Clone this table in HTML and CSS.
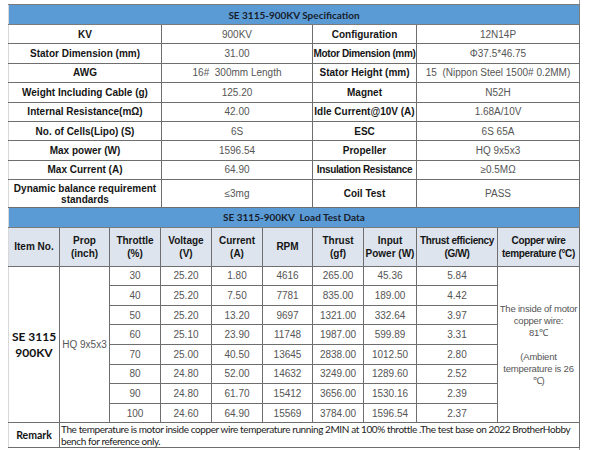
FILE: index.html
```html
<!DOCTYPE html>
<html lang="en">
<head>
    <meta charset="UTF-8">
    <link rel="stylesheet" href="styles.css">
</head>
<body>
    <div class="sheet">
        <!-- Specification -->
        <table class="spec">
            <colgroup>
                <col style="width:153px">
                <col style="width:151px">
                <col style="width:104px">
                <col style="width:163px">
            </colgroup>
            <tr class="band"><td colspan="4">SE 3115-900KV Specification</td></tr>
            <tr><th>KV</th><td>900KV</td><th>Configuration</th><td>12N14P</td></tr>
            <tr><th>Stator Dimension (mm)</th><td>31.00</td><th class="tight">Motor Dimension (mm)</th><td>Φ37.5*46.75</td></tr>
            <tr><th>AWG</th><td>16#&nbsp; 300mm Length</td><th>Stator Height (mm)</th><td>15&nbsp; (Nippon Steel 1500# 0.2MM)</td></tr>
            <tr><th>Weight Including Cable (g)</th><td>125.20</td><th>Magnet</th><td>N52H</td></tr>
            <tr><th>Internal Resistance(mΩ)</th><td>42.00</td><th>Idle Current@10V (A)</th><td>1.68A/10V</td></tr>
            <tr><th>No. of Cells(Lipo) (S)</th><td>6S</td><th>ESC</th><td>6S 65A</td></tr>
            <tr><th>Max power (W)</th><td>1596.54</td><th>Propeller</th><td>HQ 9x5x3</td></tr>
            <tr><th>Max Current (A)</th><td>64.90</td><th class="tight">Insulation Resistance</th><td>≥0.5MΩ</td></tr>
            <tr class="tall"><th class="wrap">Dynamic balance requirement standards</th><td>≤3mg</td><th>Coil Test</th><td>PASS</td></tr>
        </table>

        <!-- Load test -->
        <table class="load">
            <colgroup>
                <col style="width:51px">
                <col style="width:50px">
                <col style="width:51px">
                <col style="width:51px">
                <col style="width:51px">
                <col style="width:50px">
                <col style="width:51px">
                <col style="width:53px">
                <col style="width:81px">
                <col style="width:82px">
            </colgroup>
            <tr class="band"><td colspan="10">SE 3115-900KV&nbsp; Load Test Data</td></tr>
            <tr class="head">
                <th>Item No.</th>
                <th>Prop<br>(inch)</th>
                <th>Throttle<br>(%)</th>
                <th>Voltage<br>(V)</th>
                <th>Current<br>(A)</th>
                <th>RPM</th>
                <th>Thrust<br>(gf)</th>
                <th>Input<br>Power (W)</th>
                <th class="tight">Thrust efficiency<br>(G/W)</th>
                <th class="tight">Copper wire<br>temperature (°C)</th>
            </tr>
            <tr>
                <th rowspan="8" class="item">SE 3115<br>900KV</th>
                <td rowspan="8" class="prop">HQ 9x5x3</td>
                <td>30</td><td>25.20</td><td>1.80</td><td>4616</td><td>265.00</td><td>45.36</td><td>5.84</td>
                <td rowspan="8" class="note">The inside of motor<br>copper wire:<br>81℃<br><br>(Ambient<br>temperature is 26<br>℃)</td>
            </tr>
            <tr><td>40</td><td>25.20</td><td>7.50</td><td>7781</td><td>835.00</td><td>189.00</td><td>4.42</td></tr>
            <tr><td>50</td><td>25.20</td><td>13.20</td><td>9697</td><td>1321.00</td><td>332.64</td><td>3.97</td></tr>
            <tr><td>60</td><td>25.10</td><td>23.90</td><td>11748</td><td>1987.00</td><td>599.89</td><td>3.31</td></tr>
            <tr><td>70</td><td>25.00</td><td>40.50</td><td>13645</td><td>2838.00</td><td>1012.50</td><td>2.80</td></tr>
            <tr><td>80</td><td>24.80</td><td>52.00</td><td>14632</td><td>3249.00</td><td>1289.60</td><td>2.52</td></tr>
            <tr><td>90</td><td>24.80</td><td>61.70</td><td>15412</td><td>3656.00</td><td>1530.16</td><td>2.39</td></tr>
            <tr><td>100</td><td>24.60</td><td>64.90</td><td>15569</td><td>3784.00</td><td>1596.54</td><td>2.37</td></tr>
            <tr class="remark">
                <th>Remark</th>
                <td colspan="9">The temperature is motor inside copper wire temperature running 2MIN at 100% throttle .The test base on 2022 BrotherHobby<br>bench for reference only.</td>
            </tr>
        </table>
    </div>
</body>
</html>
```

FILE: styles.css
```css
* {
    box-sizing: border-box;
    margin: 0;
    padding: 0;
}

body {
    background: #fff;
    font-family: "Liberation Sans", Arial, sans-serif;
    color: #111;
}

.sheet {
    width: 580px;
    height: 450px;
    padding: 4px 0 0 8px;
    border-right: 1px solid #9a9a9a;
}

table {
    width: 571px;
    table-layout: fixed;
    border-collapse: collapse;
}

th, td {
    border: 1px solid #6e6e6e;
    text-align: center;
    vertical-align: middle;
    overflow: hidden;
    white-space: nowrap;
}

th {
    font-size: 10px;
    font-weight: bold;
    color: #151515;
    line-height: 11px;
}

td {
    font-size: 10px;
    color: #555;
}

th.wrap {
    white-space: normal;
}

th.tight {
    letter-spacing: -0.35px;
}

/* 青い見出し帯 */
.band td {
    background: #5b9bd5;
    border-color: #7b7b7b;
    font-family: Lato, "Liberation Sans", sans-serif;
    font-size: 10px;
    font-weight: bold;
    color: #17202c;
}

.spec tr {
    height: 19.4px;
}

.spec tr.band {
    height: 20px;
}

.spec tr.tall {
    height: 28px;
}

.spec tr > :first-child,
.load tr > :first-child {
    border-left-color: #d8d8d8;
}

.load tr {
    height: 19.6px;
}

.load tr.band {
    height: 19px;
}

.load .band td {
    border-top: none;
}

.load tr.head {
    height: 39px;
}

.head th {
    background: #dde4ee;
    line-height: 13px;
}

.item {
    font-family: Lato, "Liberation Sans", sans-serif;
    font-size: 12px;
    line-height: 16px;
    color: #111;
}

.load td.note {
    font-size: 9.5px;
    letter-spacing: -0.2px;
    line-height: 12px;
}

.load tr.remark {
    height: 25px;
}

.remark th {
    font-family: Lato, "Liberation Sans", sans-serif;
    font-size: 10.5px;
}

.remark td {
    text-align: left;
    padding-left: 1px;
    font-family: Lato, "Liberation Sans", sans-serif;
    font-size: 10px;
    letter-spacing: -0.4px;
    line-height: 12px;
    color: #222;
}
```
